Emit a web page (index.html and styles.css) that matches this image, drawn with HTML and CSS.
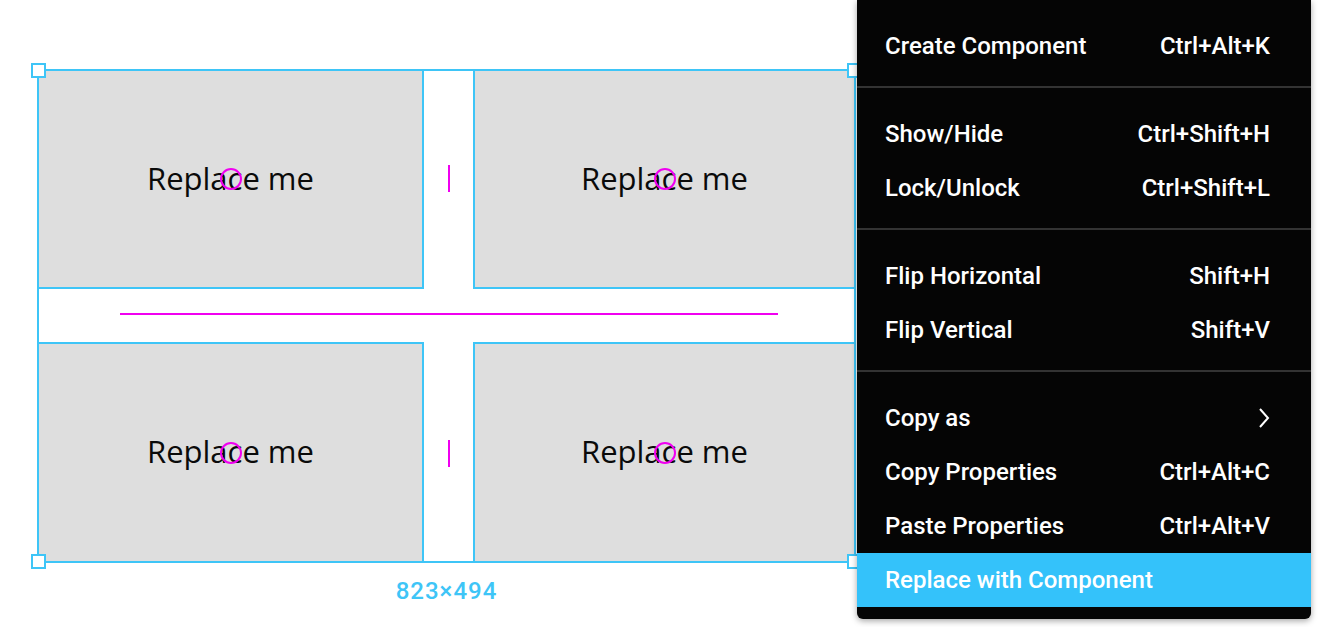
FILE: index.html
```html
<!DOCTYPE html>
<html>
<head>
<meta charset="utf-8">
<link rel="stylesheet" href="styles.css">
</head>
<body>
<div class="canvas">
  <div class="selection">
    <div class="frame">
      <div class="grid">
        <div class="cell"><span class="label">Replace me</span><span class="marker"></span></div>
        <div class="cell"><span class="label">Replace me</span><span class="marker"></span></div>
        <div class="cell"><span class="label">Replace me</span><span class="marker"></span></div>
        <div class="cell"><span class="label">Replace me</span><span class="marker"></span></div>
      </div>
      <span class="handle h-tl"></span>
      <span class="handle h-tr"></span>
      <span class="handle h-bl"></span>
      <span class="handle h-br"></span>
      <span class="guide g-h"></span>
      <span class="guide g-v1"></span>
      <span class="guide g-v2"></span>
    </div>
    <div class="dim">823×494</div>
  </div>

  <div class="menu">
    <div class="section">
      <div class="item"><span>Create Component</span><span>Ctrl+Alt+K</span></div>
    </div>
    <div class="section">
      <div class="item"><span>Show/Hide</span><span>Ctrl+Shift+H</span></div>
      <div class="item"><span>Lock/Unlock</span><span>Ctrl+Shift+L</span></div>
    </div>
    <div class="section">
      <div class="item"><span>Flip Horizontal</span><span>Shift+H</span></div>
      <div class="item"><span>Flip Vertical</span><span>Shift+V</span></div>
    </div>
    <div class="section last">
      <div class="item"><span>Copy as</span><svg class="chev" width="14" height="22" viewBox="0 0 14 22"><polyline points="3,2 11,11 3,20" fill="none" stroke="#fff" stroke-width="2"/></svg></div>
      <div class="item"><span>Copy Properties</span><span>Ctrl+Alt+C</span></div>
      <div class="item"><span>Paste Properties</span><span>Ctrl+Alt+V</span></div>
      <div class="item active"><span>Replace with Component</span></div>
    </div>
  </div>
</div>
</body>
</html>
```

FILE: styles.css
```css
html, body {
  margin: 0;
  padding: 0;
  background: #ffffff;
}

.canvas {
  position: relative;
  width: 1330px;
  height: 627px;
  overflow: hidden;
}

.selection {
  position: absolute;
  left: 37px;
  top: 69px;
  width: 819px;
}

.frame {
  position: relative;
  height: 494px;
  box-sizing: border-box;
  border: 2px solid #3ec5f7;
}

.grid {
  margin: -2px;
  height: 494px;
  display: grid;
  grid-template-columns: 387px 1fr;
  grid-template-rows: 220px 1fr;
  column-gap: 49px;
  row-gap: 53px;
}

.cell {
  position: relative;
  background: #dedede;
  border: 2px solid #3ec5f7;
  display: flex;
  align-items: center;
  justify-content: center;
}

.label {
  font-family: "Open Sans", "Noto Sans", sans-serif;
  font-size: 31px;
  color: #0a0a0a;
  line-height: 1;
  margin-top: -2px;
}

.marker {
  position: absolute;
  left: 50%;
  top: 50%;
  width: 22px;
  height: 22px;
  margin-left: -11px;
  margin-top: -11px;
  box-sizing: border-box;
  border: 2px solid #f000f0;
  border-radius: 50%;
}

.handle {
  position: absolute;
  width: 15px;
  height: 15px;
  box-sizing: border-box;
  background: #fff;
  border: 2px solid #3ec5f7;
}
.h-tl { left: -8px; top: -8px; }
.h-tr { right: -8px; top: -8px; }
.h-bl { left: -8px; bottom: -8px; }
.h-br { right: -8px; bottom: -8px; }

.guide {
  position: absolute;
  background: #f000f0;
}
.g-h {
  left: 81px;
  width: 658px;
  top: 242px;
  height: 2px;
}
.g-v1 {
  left: 409px;
  width: 2px;
  top: 94px;
  height: 27px;
}
.g-v2 {
  left: 409px;
  width: 2px;
  top: 369px;
  height: 27px;
}

.dim {
  margin-top: 15px;
  text-align: center;
  font-family: Roboto, "Liberation Sans", sans-serif;
  font-size: 24px;
  font-weight: 500;
  letter-spacing: 1px;
  line-height: 26px;
  color: #3ec5f7;
}

.menu {
  position: absolute;
  left: 857px;
  top: 0;
  width: 454px;
  background: #050505;
  border-radius: 0 0 6px 6px;
  box-shadow: 0 2px 6px rgba(0, 0, 0, 0.35);
  font-family: Roboto, "Liberation Sans", sans-serif;
  font-size: 24px;
  font-weight: 500;
  color: #fff;
}

.section {
  padding: 19px 0 13px;
  border-bottom: 2px solid #333;
}
.section.last {
  border-bottom: none;
  padding-bottom: 12px;
}

.item {
  height: 54px;
  padding: 0 41px 0 28px;
  display: flex;
  align-items: center;
  justify-content: space-between;
}

.item.active {
  background: #34c2fa;
}

.chev {
  display: block;
  margin-right: -1px;
}
```
